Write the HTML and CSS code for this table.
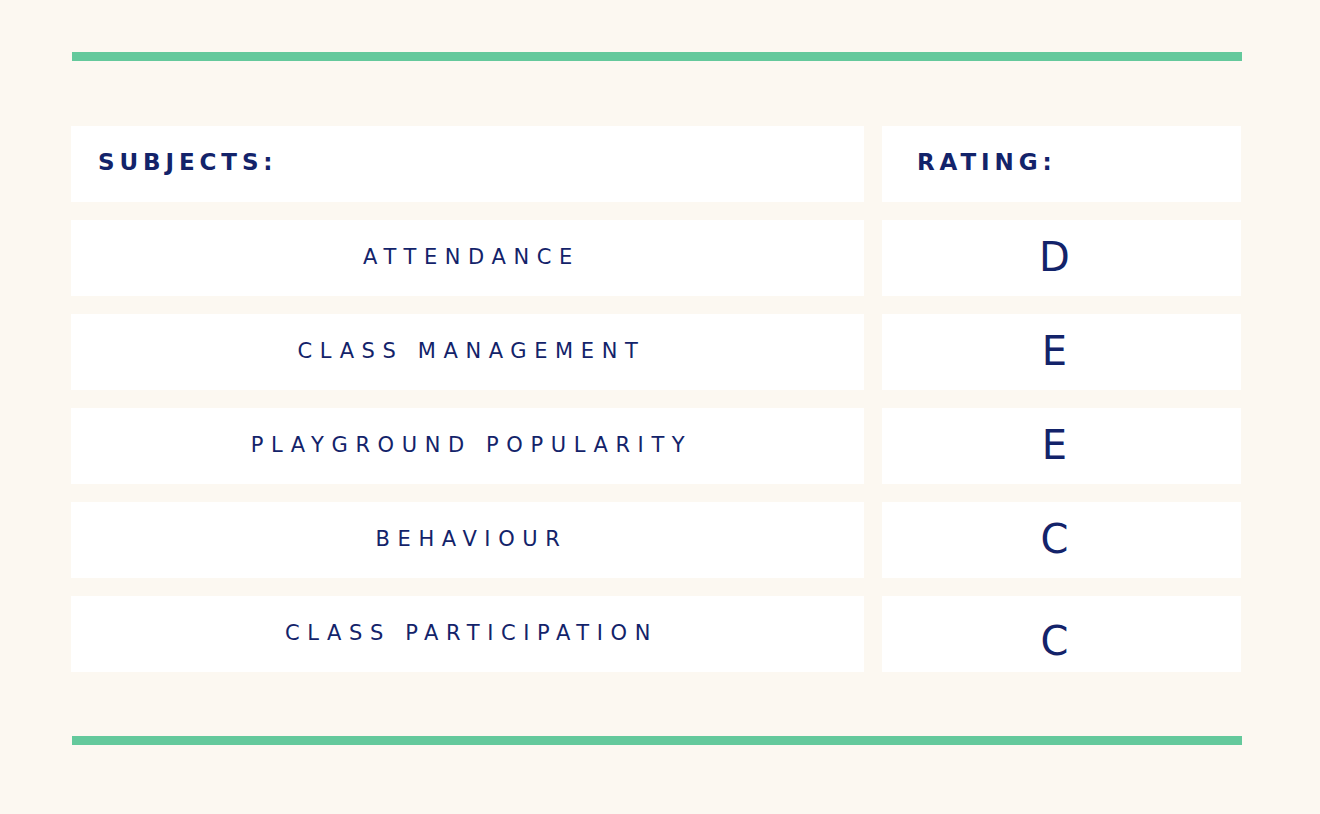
FILE: index.html
```html
<!DOCTYPE html>
<html lang="en">
<head>
<meta charset="utf-8">
<title>Report Card</title>
<link rel="stylesheet" href="styles.css">
</head>
<body>
<main class="page">
  <div class="bar"></div>
  <section class="table">
    <div class="cell head head--subject">SUBJECTS:</div>
    <div class="cell head head--rating">RATING:</div>

    <div class="cell subject">ATTENDANCE</div>
    <div class="cell grade">D</div>

    <div class="cell subject">CLASS MANAGEMENT</div>
    <div class="cell grade">E</div>

    <div class="cell subject">PLAYGROUND POPULARITY</div>
    <div class="cell grade">E</div>

    <div class="cell subject">BEHAVIOUR</div>
    <div class="cell grade">C</div>

    <div class="cell subject">CLASS PARTICIPATION</div>
    <div class="cell grade grade--low">C</div>
  </section>
  <div class="bar"></div>
</main>
</body>
</html>
```
FILE: styles.css
```css
html, body {
  margin: 0;
  padding: 0;
}

body {
  background: #fcf8f1;
  font-family: "DejaVu Sans", "Liberation Sans", sans-serif;
  color: #13236a;
  width: 1320px;
  height: 814px;
  overflow: hidden;
}

.page {
  padding: 52px 0 0 71px;
  display: flex;
  flex-direction: column;
  gap: 65px;
}

.bar {
  width: 1170px;
  height: 9px;
  margin-left: 1px;
  background: #64c99c;
}

.table {
  display: grid;
  grid-template-columns: 793px 359px;
  grid-auto-rows: 76px;
  column-gap: 18px;
  row-gap: 18px;
  margin-bottom: -1px;
}

.cell {
  background: #ffffff;
  display: flex;
  align-items: center;
  box-sizing: border-box;
}

.head {
  font-weight: bold;
  font-size: 23px;
  letter-spacing: 4.9px;
  padding-bottom: 4px;
}

.head--subject {
  padding-left: 27px;
}

.head--rating {
  padding-left: 35px;
}

.subject {
  justify-content: center;
  font-size: 21px;
  letter-spacing: 7.6px;
  padding-left: 8px;
  padding-bottom: 2px;
  font-weight: normal;
}

.grade {
  justify-content: center;
  font-size: 40px;
  letter-spacing: 0;
  padding-right: 14px;
  padding-bottom: 2px;
}

.grade--low {
  padding-top: 14px;
  padding-bottom: 0;
}
```
